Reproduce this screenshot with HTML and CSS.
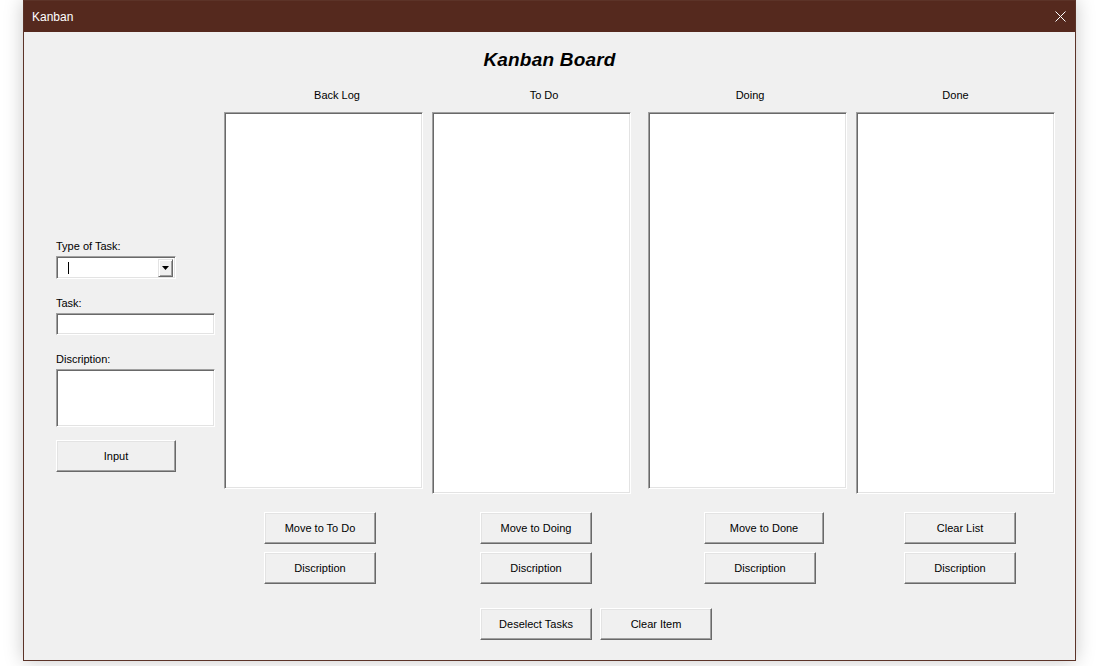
FILE: index.html
```html
<!DOCTYPE html>
<html>
<head>
<meta charset="utf-8">
<title>Kanban</title>
<link rel="stylesheet" href="styles.css">
</head>
<body>
<div class="window">
  <div class="titlebar">
    <span class="title">Kanban</span>
    <svg class="close" width="11" height="11" viewBox="0 0 11 11"><path d="M0.5 0.5 L10.5 10.5 M10.5 0.5 L0.5 10.5" stroke="#ffffff" stroke-width="1" fill="none"/></svg>
  </div>
  <div class="client">
    <h1 class="heading">Kanban Board</h1>
    <div class="main">
      <div class="form">
        <div class="lbl">Type of Task:</div>
        <div class="combo">
          <span class="caret"></span>
          <span class="drop"><svg width="7" height="4" viewBox="0 0 7 4"><path d="M0 0 H7 L3.5 4 Z" fill="#000"/></svg></span>
        </div>
        <div class="lbl lbl-task">Task:</div>
        <div class="field field-task"></div>
        <div class="lbl lbl-desc">Discription:</div>
        <div class="field field-desc"></div>
        <div class="btn btn-input">Input</div>
      </div>
      <div class="board">
        <div class="cols">
          <div class="col col-backlog">
            <div class="col-label">Back Log</div>
            <div class="list-area"><div class="list list-short"></div></div>
            <div class="btns">
              <div class="btn">Move to To Do</div>
              <div class="btn">Discription</div>
            </div>
          </div>
          <div class="col col-todo">
            <div class="col-label">To Do</div>
            <div class="list-area"><div class="list list-tall"></div></div>
            <div class="btns">
              <div class="btn">Move to Doing</div>
              <div class="btn">Discription</div>
            </div>
          </div>
          <div class="col col-doing">
            <div class="col-label">Doing</div>
            <div class="list-area"><div class="list list-short"></div></div>
            <div class="btns">
              <div class="btn btn-wide">Move to Done</div>
              <div class="btn">Discription</div>
            </div>
          </div>
          <div class="col col-done">
            <div class="col-label">Done</div>
            <div class="list-area"><div class="list list-tall"></div></div>
            <div class="btns">
              <div class="btn">Clear List</div>
              <div class="btn">Discription</div>
            </div>
          </div>
        </div>
        <div class="bottom-row">
          <div class="btn">Deselect Tasks</div>
          <div class="btn">Clear Item</div>
        </div>
      </div>
    </div>
  </div>
</div>
</body>
</html>
```
FILE: styles.css
```css
* { box-sizing: border-box; }
html, body { margin: 0; padding: 0; background: #ffffff; }
body {
  width: 1111px;
  height: 666px;
  overflow: hidden;
  font-family: "Liberation Sans", Arial, sans-serif;
  font-size: 11px;
  color: #000;
}
.window {
  margin-left: 23px;
  width: 1053px;
  height: 661px;
  border: 1px solid #5c3328;
  background: #f0f0f0;
  box-shadow: 0 0 18px rgba(0, 0, 0, 0.22);
  display: flex;
  flex-direction: column;
}
.titlebar {
  height: 31px;
  background: #55291e;
  display: flex;
  align-items: center;
  padding-left: 8px;
  flex: none;
}
.title {
  color: #ffffff;
  font-size: 12px;
  line-height: 14px;
  padding-top: 1px;
}
.close {
  margin-left: auto;
  margin-right: 9px;
}
.client {
  flex: 1;
  background: #f0f0f0;
}
.heading {
  margin: 0;
  padding-top: 14px;
  height: 42px;
  line-height: 28px;
  text-align: center;
  font-size: 19px;
  font-weight: bold;
  font-style: italic;
  letter-spacing: 0.2px;
}
.main {
  display: flex;
  padding-left: 32px;
}
.form {
  width: 159px;
  display: flex;
  flex-direction: column;
  align-items: flex-start;
  padding-top: 166px;
}
.lbl {
  height: 13px;
  line-height: 13px;
  white-space: nowrap;
}
.lbl-task { margin-top: 18px; }
.lbl-desc { margin-top: 18px; }
.combo {
  margin-top: 3px;
  width: 120px;
  height: 23px;
  background: #fff;
  border-top: 1px solid #a0a0a0;
  border-left: 1px solid #a0a0a0;
  border-right: 1px solid #ffffff;
  border-bottom: 1px solid #ffffff;
  box-shadow: inset 1px 1px 0 #696969, inset -1px -1px 0 #e3e3e3;
  display: flex;
  align-items: center;
  padding-right: 2px;
}
.caret {
  width: 1px;
  height: 12px;
  background: #000;
  margin-left: 11px;
}
.drop {
  margin-left: auto;
  width: 15px;
  height: 18px;
  margin-top: 1px;
  background: #f0f0f0;
  border-top: 1px solid #e3e3e3;
  border-left: 1px solid #e3e3e3;
  border-right: 1px solid #696969;
  border-bottom: 1px solid #696969;
  box-shadow: inset 1px 1px 0 #ffffff, inset -1px -1px 0 #a0a0a0;
  display: flex;
  align-items: center;
  justify-content: center;
}
.field {
  width: 159px;
  background: #fff;
  border-top: 1px solid #a0a0a0;
  border-left: 1px solid #a0a0a0;
  border-right: 1px solid #ffffff;
  border-bottom: 1px solid #ffffff;
  box-shadow: inset 1px 1px 0 #696969, inset -1px -1px 0 #e3e3e3;
}
.field-task { margin-top: 3px; height: 22px; }
.field-desc { margin-top: 3px; height: 58px; }
.btn {
  width: 112px;
  height: 32px;
  background: #f0f0f0;
  border-top: 1px solid #ffffff;
  border-left: 1px solid #ffffff;
  border-right: 1px solid #696969;
  border-bottom: 1px solid #696969;
  box-shadow: inset -1px -1px 0 #a0a0a0, inset 1px 1px 0 #e3e3e3;
  display: flex;
  align-items: center;
  justify-content: center;
  white-space: nowrap;
  padding-bottom: 1px;
}
.btn-input {
  width: 120px;
  margin-top: 13px;
}
.btn-wide { width: 120px; }
.board {
  margin-left: 9px;
  display: flex;
  flex-direction: column;
}
.cols {
  display: flex;
  padding-top: 13px;
}
.col {
  width: 199px;
  display: flex;
  flex-direction: column;
}
.col-todo, .col-done { margin-left: 9px; }
.col-doing { margin-left: 17px; }
.col-label {
  height: 16px;
  line-height: 16px;
  text-align: center;
  white-space: nowrap;
}
.col-backlog .col-label { padding-left: 27px; }
.col-todo .col-label { padding-left: 25px; }
.col-doing .col-label { padding-left: 5px; }
.col-done .col-label { padding-left: 0; }
.list-area {
  margin-top: 9px;
  height: 382px;
}
.list {
  width: 199px;
  background: #fff;
  border-top: 1px solid #a0a0a0;
  border-left: 1px solid #a0a0a0;
  border-right: 1px solid #ffffff;
  border-bottom: 1px solid #ffffff;
  box-shadow: inset 1px 1px 0 #696969, inset -1px -1px 0 #e3e3e3;
}
.list-short { height: 377px; }
.list-tall { height: 382px; }
.btns {
  margin-top: 18px;
  display: flex;
  flex-direction: column;
  gap: 8px;
}
.col-backlog .btns { padding-left: 40px; }
.col-todo .btns { padding-left: 48px; }
.col-doing .btns { padding-left: 56px; }
.col-done .btns { padding-left: 48px; }
.bottom-row {
  display: flex;
  gap: 8px;
  margin-top: 24px;
  padding-left: 256px;
}
```
